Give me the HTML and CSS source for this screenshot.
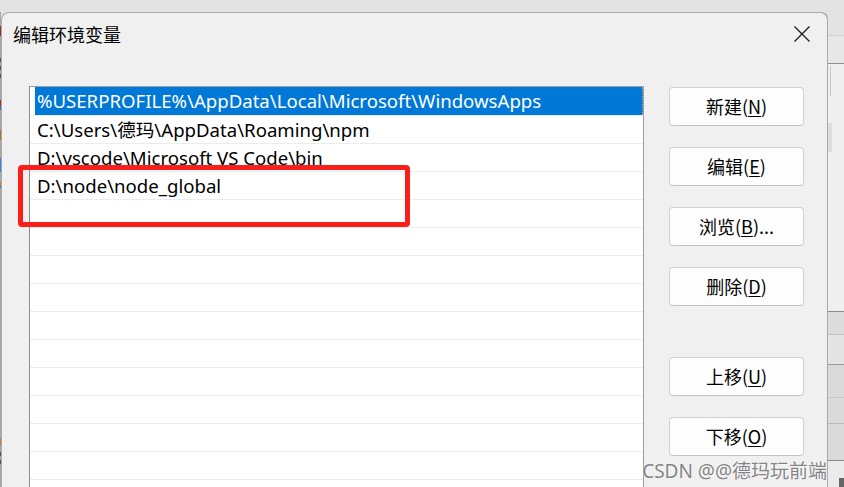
FILE: index.html
```html
<!DOCTYPE html>
<html lang="zh-CN">
<head>
<meta charset="utf-8">
<title>编辑环境变量</title>
<link rel="stylesheet" href="styles.css">
</head>
<body>
<div class="edge"></div>
<div class="dialog">
  <div class="titlebar">
    <span class="title">编辑环境变量</span>
    <svg class="close" width="16" height="16" viewBox="0 0 16 16"><path d="M0.5 0.5 L15.5 15.5 M15.5 0.5 L0.5 15.5" stroke="#1b1b1b" stroke-width="1.3" fill="none"/></svg>
  </div>
  <div class="content">
    <ul class="list">
      <li class="row sel"><span class="item">%USERPROFILE%\AppData\Local\Microsoft\WindowsApps</span></li>
      <li class="row"><span class="item">C:\Users\德玛\AppData\Roaming\npm</span></li>
      <li class="row"><span class="item">D:\vscode\Microsoft VS Code\bin</span></li>
      <li class="row"><span class="item">D:\node\node_global</span></li>
      <li class="row"></li>
      <li class="row"></li>
      <li class="row"></li>
      <li class="row"></li>
      <li class="row"></li>
      <li class="row"></li>
      <li class="row"></li>
      <li class="row"></li>
      <li class="row"></li>
      <li class="row"></li>
    </ul>
    <div class="buttons">
      <button class="btn">新建(<u>N</u>)</button>
      <button class="btn">编辑(<u>E</u>)</button>
      <button class="btn">浏览(<u>B</u>)...</button>
      <button class="btn">删除(<u>D</u>)</button>
      <button class="btn gap">上移(<u>U</u>)</button>
      <button class="btn">下移(<u>O</u>)</button>
    </div>
  </div>
  <div class="highlight"></div>
  <div class="watermark">CSDN @@德玛玩前端</div>
</div>
<div class="behind">
  <div class="band b1"></div>
  <div class="band b2"></div>
  <div class="band b3"><span class="tick"></span><span class="blk"></span></div>
  <div class="band b4"></div>
  <div class="band b5"></div>
  <div class="band b6"></div>
  <div class="band b7"></div>
  <div class="band b8"></div>
  <div class="band b9"><span class="dark"></span></div>
</div>
</body>
</html>
```

FILE: styles.css
```css
* { box-sizing: border-box; }
html, body { margin: 0; padding: 0; }
body {
  width: 844px;
  height: 487px;
  overflow: hidden;
  background: #e3e3e3;
  display: flex;
  align-items: flex-start;
  font-family: "Noto Sans", "Noto Sans CJK SC", sans-serif;
  color: #000;
}
.edge {
  width: 1px;
  height: 487px;
  flex: none;
  background: linear-gradient(to bottom,
    #e3e3e3 0 12px, #a8a8a8 12px 26px, #8a3434 26px 36px, #a8a8a8 36px 58px,
    #555 58px 62px, #a8a8a8 62px 66px, #555 66px 70px, #a8a8a8 70px 74px, #555 74px 78px,
    #a8a8a8 78px 100px, #b03030 100px 106px, #3a6fb0 106px 110px, #a8a8a8 110px 130px,
    #b07030 130px 140px, #a8a8a8 140px 158px, #3b7fd0 158px 172px, #a8a8a8 172px 182px,
    #d08030 182px 186px, #3b7fd0 186px 188px, #a8a8a8 188px 438px, #c08040 438px 446px,
    #a8a8a8 446px 452px, #555 452px 456px, #a8a8a8 456px 460px, #555 460px 464px, #a8a8a8 464px 487px);
}
.dialog {
  position: relative;
  flex: none;
  width: 827px;
  height: 475px;
  margin-top: 12px;
  background: #f0f0f0;
  border: 1px solid #a9a9a9;
  border-bottom: none;
  border-radius: 8px 8px 0 0;
  box-shadow: 1px 0 0 #c6c6c6;
  display: flex;
  flex-direction: column;
}
.titlebar {
  height: 42px;
  flex: none;
  display: flex;
  align-items: center;
  justify-content: space-between;
  padding: 0 17px 0 11px;
}
.title {
  font-family: "Noto Sans CJK SC", sans-serif;
  font-size: 18px;
  line-height: 20px;
}
.close { display: block; }
.content {
  flex: 1;
  display: flex;
  align-items: flex-start;
  padding: 31px 0 0 27px;
  gap: 25px;
}
.list {
  list-style: none;
  margin: 0;
  padding: 1px 0 0 0;
  width: 615px;
  height: 420px;
  background: #fff;
  border: 1px solid #9c9c9c;
  border-left-color: #8c8c8c;
  border-bottom: none;
  overflow: hidden;
  flex: none;
}
.row {
  height: 28px;
  border-bottom: 1px solid #ececec;
  font-size: 18.6px;
  line-height: 27px;
  white-space: nowrap;
}
.item {
  display: block;
  height: 27px;
  margin-left: 5px;
  padding-left: 2px;
}
.row.sel {
  margin-top: -1px;
  height: 29px;
}
.row.sel .item {
  height: 28px;
  line-height: 28px;
  background: #0078d7;
  color: #fff;
  border-right: 1px dotted #e8a050;
}
.buttons {
  display: flex;
  flex-direction: column;
  gap: 21px;
  padding-top: 1px;
  flex: none;
}
.btn {
  width: 135px;
  height: 39px;
  background: #fdfdfd;
  border: 1px solid #d0d0d0;
  border-bottom-color: #c2c2c2;
  border-radius: 4px;
  font-family: "Noto Sans CJK SC", sans-serif;
  font-size: 18px;
  color: #000;
  padding: 0;
  line-height: 37px;
  text-align: center;
}
.btn u { text-underline-offset: 2px; }
.btn.gap { margin-top: 30px; }
.highlight {
  position: absolute;
  left: 16px;
  top: 152px;
  width: 392px;
  height: 62px;
  border: 5px solid #fa1f1a;
  border-radius: 4px;
}
.watermark {
  position: absolute;
  right: 0;
  bottom: 5px;
  font-size: 19px;
  line-height: 22px;
  color: rgba(110, 110, 110, 0.85);
  text-shadow: 0 0 2px rgba(255,255,255,0.9);
  white-space: nowrap;
}
.behind {
  flex: 1;
  height: 487px;
  display: flex;
  flex-direction: column;
}
.band { flex: none; position: relative; }
.b1 { height: 36px; background: #e3e3e3; border-bottom: 1px solid #d0d0d0; }
.b2 { height: 28px; background: #e7e7e7; border-bottom: 1px solid #8e8e8e; }
.b3 { height: 248px; background: #efefef; border-bottom: 1px solid #8a8a8a; }
.b4 { height: 23px; background: #dcdcdc; border-bottom: 1px solid #c4c4c4; }
.b5 { height: 30px; background: #e4e4e4; border-bottom: 1px solid #9a9a9a; }
.b6 { height: 33px; background: #dadada; border-bottom: 1px solid #c8c8c8; }
.b7 { height: 26px; background: #dadada; border-bottom: 1px solid #bdbdbd; }
.b8 { height: 37px; background: #dadada; border-bottom: 1px solid #8a8a8a; }
.b9 { flex: 1; background: #ebebeb; }
.tick { position: absolute; left: 2px; top: 2px; width: 1px; height: 30px; background: #c8c8c8; }
.blk { position: absolute; left: 0; top: 59px; width: 4px; height: 29px; background: #dedede; }
.dark { position: absolute; left: 11px; top: 17px; width: 6px; height: 10px; background: #666; }
```
